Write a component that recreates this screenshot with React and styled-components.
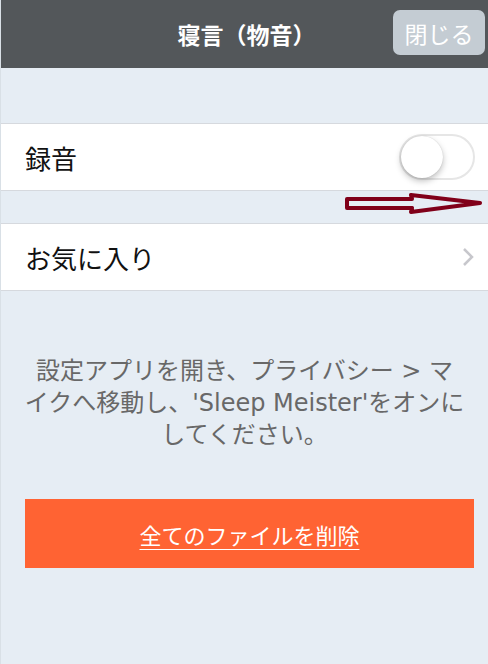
import React from 'react'
import styled, { createGlobalStyle } from 'styled-components'

const GlobalStyle = createGlobalStyle`
  html, body {
    margin: 0;
    padding: 0;
    background: #e6edf4;
  }
  body {
    font-family: "Noto Sans CJK JP", "Noto Sans", sans-serif;
  }
`

const App = () => {
  return (
    <>
      <GlobalStyle />
      <Screen>
        <Header>
          <HeaderTitle>寝言（物音）</HeaderTitle>
          <CloseButton>閉じる</CloseButton>
        </Header>

        <Spacer height={55} />
        <Row>
          <RowLabel>録音</RowLabel>
          <Toggle />
        </Row>

        <Spacer height={32}>
          <Arrow viewBox="0 0 138 22" width="138" height="22">
            <path
              d="M2 6 L67 6 L66 2 L135 10 L66 19 L67 15 L2 15 Z"
              fill="none"
              stroke="#800019"
              strokeWidth="4"
              strokeLinejoin="round"
            />
          </Arrow>
        </Spacer>
        <Row>
          <RowLabel>お気に入り</RowLabel>
          <Chevron viewBox="0 0 12 20" width="12" height="20">
            <path d="M2 2 L10 10 L2 18" fill="none" stroke="#c7c7cc" strokeWidth="2.5" />
          </Chevron>
        </Row>

        <Notice>
          設定アプリを開き、プライバシー &gt; マ<br />
          イクへ移動し、'Sleep Meister'をオンに<br />
          してください。
        </Notice>

        <DeleteButton>
          <span>全てのファイルを削除</span>
        </DeleteButton>
      </Screen>
    </>
  )
}

const Screen = styled.div`
  width: 488px;
  min-height: 664px;
  background: #e6edf4;
  border-left: 1px solid #d9e0e6;
  box-sizing: border-box;
  display: flex;
  flex-direction: column;
`

const Header = styled.header`
  height: 68px;
  background: #53575a;
  position: relative;
  display: flex;
  align-items: center;
  justify-content: center;
`

const HeaderTitle = styled.h1`
  margin: 0 0 0 4px;
  font-size: 23px;
  font-weight: 700;
  color: #ffffff;
`

const CloseButton = styled.button`
  position: absolute;
  right: 3px;
  top: 10px;
  width: 92px;
  height: 45px;
  border: none;
  border-radius: 7px;
  background: #c4ccd3;
  color: #ffffff;
  font-family: inherit;
  font-size: 23px;
  padding: 0;
`

const Spacer = styled.div`
  height: ${p => p.height}px;
  position: relative;
`

const Row = styled.div`
  height: 66px;
  background: #ffffff;
  border-top: 1px solid #d6d9de;
  border-bottom: 1px solid #d6d9de;
  display: flex;
  align-items: center;
  justify-content: space-between;
  padding: 0 13px 0 24px;
`

const RowLabel = styled.span`
  font-size: 26px;
  color: #111111;
`

const Toggle = styled.div`
  width: 76px;
  height: 46px;
  border-radius: 23px;
  border: 2px solid #e6e6e6;
  box-sizing: border-box;
  position: relative;
  background: #ffffff;

  &::after {
    content: '';
    position: absolute;
    left: 0;
    top: 0;
    width: 42px;
    height: 42px;
    border-radius: 50%;
    background: #ffffff;
    box-shadow: 0 3px 6px rgba(0, 0, 0, 0.25), 0 0 1px rgba(0, 0, 0, 0.2);
  }
`

const Arrow = styled.svg`
  position: absolute;
  left: 344px;
  top: 2px;
  display: block;
`

const Chevron = styled.svg`
  display: block;
  margin-right: 1px;
`

const Notice = styled.p`
  margin: 64px 0 0;
  text-align: center;
  font-family: "DejaVu Sans", "Noto Sans CJK JP", sans-serif;
  font-size: 24px;
  line-height: 32px;
  color: #686868;
`

const DeleteButton = styled.div`
  margin: 48px 14px 0 24px;
  height: 69px;
  background: #ff6333;
  display: flex;
  align-items: center;
  justify-content: center;

  span {
    font-size: 22px;
    color: #ffffff;
    text-decoration: underline;
    text-underline-offset: 5px;
    text-decoration-thickness: 1px;
  }
`

export default App
